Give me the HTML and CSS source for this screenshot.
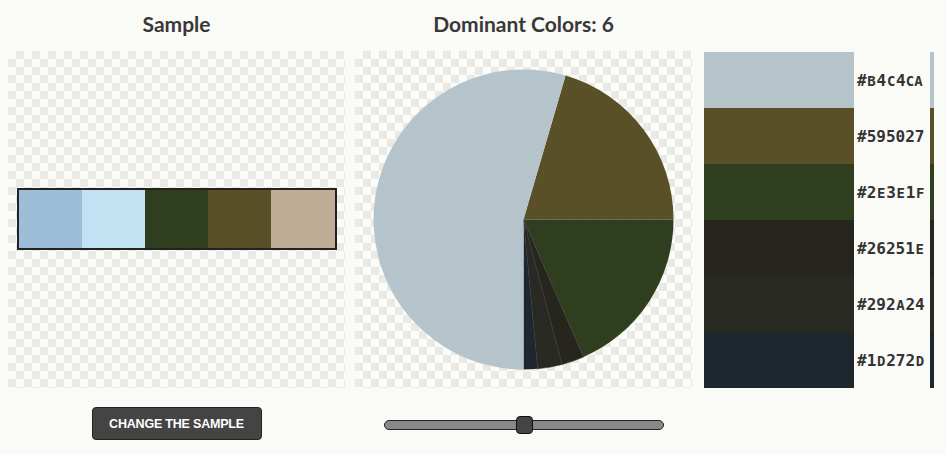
FILE: index.html
```html
<!DOCTYPE html>
<html lang="en">
    <head>
        <meta charset="utf-8" />
        <meta name="viewport" content="width=device-width, initial-scale=1" />
        <title>Dominant Colors</title>
        <link rel="stylesheet" href="styles.css">
    </head>
    <body>
        <main class="layout">
            <section class="col">
                <h2 class="title">Sample</h2>
                <div class="board sample">
                    <div class="palette">
                        <span style="background:#9dbdd8"></span>
                        <span style="background:#c2e1f3"></span>
                        <span style="background:#2e3e1f"></span>
                        <span style="background:#595027"></span>
                        <span style="background:#bfae95"></span>
                    </div>
                </div>
                <div class="controls">
                    <button class="btn">CHANGE THE SAMPLE</button>
                </div>
            </section>
            <section class="col">
                <h2 class="title">Dominant Colors: 6</h2>
                <div class="board">
                    <svg class="pie" width="337" height="337" viewBox="0 0 337 337">
                        <path fill="#595027" d="M168.5 168.5 L210.6 24.5 A150 150 0 0 1 318.5 168.5 Z"/>
                        <path fill="#2e3e1f" d="M168.5 168.5 L318.5 168.5 A150 150 0 0 1 228.55 305.96 Z"/>
                        <path fill="#26251e" stroke="#3a3a34" stroke-width="0.6" d="M168.5 168.5 L228.55 305.96 A150 150 0 0 1 207.07 313.46 Z"/>
                        <path fill="#292a24" stroke="#3a3a34" stroke-width="0.6" d="M168.5 168.5 L207.07 313.46 A150 150 0 0 1 182.62 317.84 Z"/>
                        <path fill="#1d272d" d="M168.5 168.5 L182.62 317.84 A150 150 0 0 1 168.5 318.5 Z"/>
                        <path fill="#b4c4ca" d="M168.5 168.5 L168.5 318.5 A150 150 0 1 1 210.6 24.5 Z"/>
                    </svg>
                </div>
                <div class="controls">
                    <input class="range" type="range" min="0" max="100" value="50">
                </div>
            </section>
            <section class="list">
                <div class="row"><span class="swatch" style="background:#b4c4ca"></span><span class="hex">#<i>B</i>4<i>C</i>4<i>CA</i></span><span class="edge" style="background:#b4c4ca"></span></div>
                <div class="row"><span class="swatch" style="background:#595027"></span><span class="hex">#595027</span><span class="edge" style="background:#595027"></span></div>
                <div class="row"><span class="swatch" style="background:#2e3e1f"></span><span class="hex">#2<i>E</i>3<i>E</i>1<i>F</i></span><span class="edge" style="background:#2e3e1f"></span></div>
                <div class="row"><span class="swatch" style="background:#26251e"></span><span class="hex">#26251<i>E</i></span><span class="edge" style="background:#26251e"></span></div>
                <div class="row"><span class="swatch" style="background:#292a24"></span><span class="hex">#292<i>A</i>24</span><span class="edge" style="background:#292a24"></span></div>
                <div class="row"><span class="swatch" style="background:#1d272d"></span><span class="hex">#1<i>D</i>272<i>D</i></span><span class="edge" style="background:#1d272d"></span></div>
            </section>
        </main>
    </body>
</html>
```

FILE: styles.css
```css
* { margin: 0; padding: 0; box-sizing: border-box; }
body { background: #fafaf7; font-family: Lato, "Open Sans", sans-serif; color: #333; }

.layout { display: flex; padding-left: 8px; }
.col { width: 337px; display: flex; flex-direction: column; align-items: center; }
.col + .col { margin-left: 10px; }

.title {
    height: 51px;
    line-height: 48px;
    font-size: 21px;
    font-weight: bold;
    color: #383838;}

.board {
    width: 337px;
    height: 337px;
    background-color: #fbfbf7;
    background-image: conic-gradient(#e9e9e5 25%, transparent 0 50%, #e9e9e5 0 75%, transparent 0);
    background-size: 16px 16px;}
.pie { display: block; }

.sample { display: flex; align-items: center; justify-content: center; }
.palette {
    display: flex;
    width: 320px;
    height: 62px;
    margin-top: -2px;
    border: 2px solid #222;}
.palette span { flex: 1; }

.controls { height: 67px; display: flex; align-items: center; justify-content: center; padding-top: 4px; }

.btn {
    width: 170px;
    height: 33px;
    background: #444;
    color: #fff;
    border: 1px solid #222;
    border-radius: 4px;
    font-family: "Liberation Sans", Arial, sans-serif;
    font-weight: bold;
    font-size: 12.5px;
    letter-spacing: -0.2px;}

.range {
    -webkit-appearance: none;
    appearance: none;
    width: 280px;
    height: 18px;
    background: transparent;
    margin-left: 1px;
    margin-top: 2px;}
.range::-webkit-slider-runnable-track {
    height: 10px;
    background: #888;
    border: 1px solid #222;
    border-radius: 5px;}
.range::-webkit-slider-thumb {
    -webkit-appearance: none;
    width: 17px;
    height: 18px;
    margin-top: -5px;
    background: #444;
    border: 1px solid #111;
    border-radius: 4px;}

.list { margin-left: 12px; padding-top: 52px; display: flex; flex-direction: column; }
.row { display: flex; height: 56px; align-items: center; }
.swatch { width: 150px; height: 56px; }
.hex {
    width: 76px;
    padding-left: 3px;
    font-family: "DejaVu Sans Mono", monospace;
    font-weight: bold;
    font-size: 16px;
    color: #333;}
.hex i { font-style: normal; font-size: 14px; display: inline-block; width: 9.9px; text-align: center; }
.edge { width: 4px; height: 56px; }
```
